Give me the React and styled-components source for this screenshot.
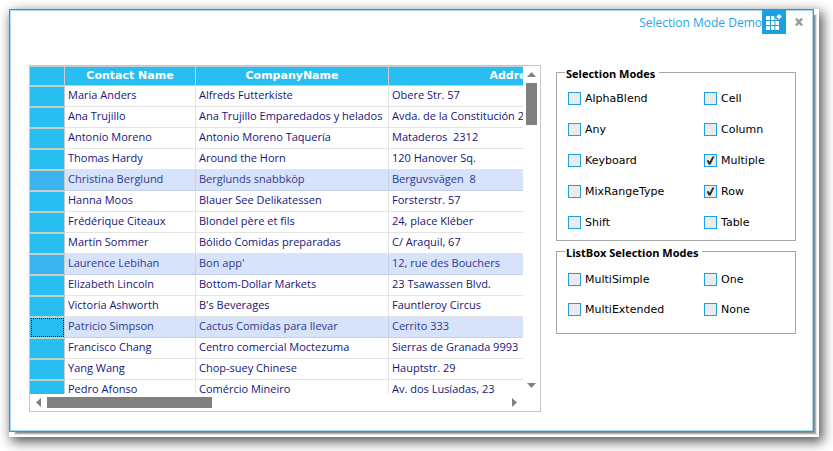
import React, { useState } from "react";
import styled, { createGlobalStyle, css } from "styled-components";

const GlobalStyle = createGlobalStyle`
  *, *::before, *::after { box-sizing: border-box; }
  body { margin: 0; background: #fff; font-family: "Open Sans", "Noto Sans", sans-serif; font-size: 11px; }
`;

const Page = styled.div`
  min-height: 100vh;
  padding: 9px 14px 14px 9px;
`;

const Backing = styled.div`
  padding: 0 5px 5px 0;
  background: #fff;
  box-shadow: 3px 4px 11px 1px rgba(0, 0, 0, 0.65);
`;

const Window = styled.main`
  display: flex;
  flex-direction: column;
  background: #fff;
  border: 1px solid #1b9fe0;
  box-shadow: inset 0 0 0 1px #a4dcf5, 4px 4px 0 -3px #929292, 4px 4px 0 -2px #b4b4b4, 4px 4px 0 -1px #e2e2e2;
`;

const TitleBar = styled.header`
  display: flex;
  justify-content: flex-end;
  height: 24px;
  padding-right: 10px;
`;

const Title = styled.h1`
  margin: 0;
  color: #2ba3e2;
  font: 400 12px/26px "Open Sans", "Noto Sans", sans-serif;
`;

const AppIcon = styled.svg`
  display: block;
  width: 24px;
  height: 24px;
`;

const CloseButton = styled.button`
  display: flex;
  align-items: center;
  justify-content: center;
  width: 8px;
  height: 24px;
  margin-left: 9px;
  padding: 0;
  border: 0;
  background: none;
`;

const Content = styled.div`
  display: flex;
  align-items: flex-start;
  gap: 15px;
  padding: 31px 17px 19px 19px;
`;

const GridFrame = styled.section`
  flex: 1;
  min-width: 0;
  display: grid;
  grid-template-columns: minmax(0, 1fr) 17px;
  grid-template-rows: 328px 17px;
  border: 1px solid #c6c6c6;
`;

const Viewport = styled.div`
  overflow: hidden;
`;

const Table = styled.table`
  width: 611px;
  table-layout: fixed;
  border-collapse: separate;
  border-spacing: 0;
  color: #15157a;
`;

const Column = styled.col`
  width: ${(p) => p.$width}px;
`;

const HeadCell = styled.th`
  height: 20px;
  padding: 0;
  background: #29bef2;
  border: 1px solid #c9cdd0;
  border-left: 0;
  color: #fff;
  font: 700 11px/16px "DejaVu Sans", sans-serif;
`;

const Cell = styled.td`
  height: 21px;
  padding: 0 0 2px 3px;
  border-right: 1px solid #e4e4e4;
  border-bottom: 1px solid #e4e4e4;
  line-height: 18px;
  white-space: pre;
`;

const RowHeader = styled.th`
  height: 21px;
  padding: 0;
  background: #29bef2;
  border: 1px solid #cbcbcb;
  border-left: 0;
  ${(p) => p.$focused && css`
    outline: 1px dotted #000;
    outline-offset: -2px;
  `}
`;

const Row = styled.tr`
  ${(p) => p.$selected && css`
    color: #2e3990;
    ${Cell} { background: #d7e3fa; border-color: #c5d1e8; }
    ${RowHeader} { background: ${p.$focused ? "#29bef2" : "#3ab3ef"}; }
  `}
`;

const ScrollBar = styled.div`
  display: flex;
  flex-direction: ${(p) => (p.$vertical ? "column" : "row")};
  align-items: center;
  justify-content: space-between;
  padding: ${(p) => (p.$vertical ? "6px 0" : "0 6px")};
`;

const ScrollTrack = styled.div`
  flex: 1;
  display: flex;
  margin: ${(p) => (p.$vertical ? "6px 0" : "0 6px")};
`;

const Thumb = styled.div`
  background: #808080;
  width: ${(p) => (p.$vertical ? "11px" : "36%")};
  height: ${(p) => (p.$vertical ? "42px" : "11px")};
`;

const ArrowButton = styled.button`
  display: flex;
  align-items: center;
  justify-content: center;
  padding: 0;
  border: 0;
  background: none;
`;

const Sidebar = styled.aside`
  flex: 0 0 240px;
  display: flex;
  flex-direction: column;
  gap: 3px;
`;

const Group = styled.fieldset`
  display: grid;
  grid-template-columns: 136px 1fr;
  row-gap: ${(p) => p.$gap}px;
  margin: 0;
  padding: ${(p) => p.$top}px 0 ${(p) => p.$bottom}px 11px;
  border: 1px solid #a7a7a7;
`;

const Legend = styled.legend`
  margin-left: -3px;
  padding: 3px 4px 0 1px;
  color: #000;
  font: 700 11px/12px "Open Sans", "Noto Sans", sans-serif;
`;

const OptionLabel = styled.label`
  display: flex;
  align-items: center;
  gap: 4px;
  color: #000;
  font: 11px/15px "DejaVu Sans", sans-serif;
`;

const Tick = styled.input`
  appearance: none;
  flex: none;
  width: 13px;
  height: 13px;
  margin: 0;
  border: 1px solid #1ba1e2;
  background: #ebebeb;
`;

const TickBox = styled.span`
  display: grid;
  & > * { grid-area: 1 / 1; }
  svg { pointer-events: none; }
`;

const customers = [
  ["Maria Anders", "Alfreds Futterkiste", "Obere Str. 57"],
  ["Ana Trujillo", "Ana Trujillo Emparedados y helados", "Avda. de la Constitución 2222"],
  ["Antonio Moreno", "Antonio Moreno Taquería", "Mataderos  2312"],
  ["Thomas Hardy", "Around the Horn", "120 Hanover Sq."],
  ["Christina Berglund", "Berglunds snabbköp", "Berguvsvägen  8"],
  ["Hanna Moos", "Blauer See Delikatessen", "Forsterstr. 57"],
  ["Frédérique Citeaux", "Blondel père et fils", "24, place Kléber"],
  ["Martín Sommer", "Bólido Comidas preparadas", "C/ Araquil, 67"],
  ["Laurence Lebihan", "Bon app'", "12, rue des Bouchers"],
  ["Elizabeth Lincoln", "Bottom-Dollar Markets", "23 Tsawassen Blvd."],
  ["Victoria Ashworth", "B's Beverages", "Fauntleroy Circus"],
  ["Patricio Simpson", "Cactus Comidas para llevar", "Cerrito 333"],
  ["Francisco Chang", "Centro comercial Moctezuma", "Sierras de Granada 9993"],
  ["Yang Wang", "Chop-suey Chinese", "Hauptstr. 29"],
  ["Pedro Afonso", "Comércio Mineiro", "Av. dos Lusíadas, 23"],
];
const selectedRows = [4, 8, 11];
const focusedRow = 11;

const selectionModes = [
  "AlphaBlend", "Cell", "Any", "Column", "Keyboard", "Multiple", "MixRangeType", "Row", "Shift", "Table",
];
const listBoxModes = ["MultiSimple", "One", "MultiExtended", "None"];

const arrows = {
  up: { w: 9, h: 5, d: "M0 5L4.5 0L9 5Z" },
  down: { w: 9, h: 5, d: "M0 0L4.5 5L9 0Z" },
  left: { w: 5, h: 9, d: "M5 0L0 4.5L5 9Z" },
  right: { w: 5, h: 9, d: "M0 0L5 4.5L0 9Z" },
};

function Arrow({ direction }) {
  const { w, h, d } = arrows[direction];
  return (
    <ArrowButton type="button" aria-label={`Scroll ${direction}`}>
      <svg width={w} height={h}><path d={d} fill="#808080" /></svg>
    </ArrowButton>
  );
}

function Scroll({ vertical }) {
  return (
    <ScrollBar $vertical={vertical}>
      <Arrow direction={vertical ? "up" : "left"} />
      <ScrollTrack $vertical={vertical}><Thumb $vertical={vertical} /></ScrollTrack>
      <Arrow direction={vertical ? "down" : "right"} />
    </ScrollBar>
  );
}

function Option({ name, initial }) {
  const [on, setOn] = useState(initial);
  return (
    <OptionLabel>
      <TickBox>
        <Tick type="checkbox" checked={on} onChange={() => setOn(!on)} />
        {on && (
          <svg width="13" height="13">
            <path d="M2.6 6.8L4.6 6L5.7 7.8L8.2 2.8L10.6 2.2L6.6 10.4L4.8 10.8Z" fill="#303030" />
          </svg>
        )}
      </TickBox>
      {name}
    </OptionLabel>
  );
}

export default function App() {
  return (
    <Page>
      <GlobalStyle />
      <Backing>
        <Window>
          <TitleBar>
            <Title>Selection Mode Demo</Title>
            <AppIcon viewBox="0 0 24 24" aria-hidden="true">
              <path fill="#1ba1e2" d="M0 0H24V24H0Z" />
              <path
                fill="#fff"
                d="M4 6H8V10H4ZM9 6H12.4V10H9ZM4 11H8V15H4ZM9 11H12.4V15H9ZM13.4 11H17V15H13.4ZM4 16H8V20H4ZM9 16H12.4V20H9ZM13.4 16H17V20H13.4ZM13.4 8L15.4 10H13.4ZM17 4L19.8 6.8L17 9.6L14.2 6.8Z"
              />
            </AppIcon>
            <CloseButton type="button" aria-label="Close">
              <svg width="8" height="8">
                <path d="M1 0.5L7 7.5M7 0.5L1 7.5" stroke="#999" strokeWidth="2.4" />
              </svg>
            </CloseButton>
          </TitleBar>
          <Content>
            <GridFrame>
              <Viewport>
                <Table>
                  <colgroup>
                    {[35, 131, 193, 252].map((w, i) => <Column key={i} $width={w} />)}
                  </colgroup>
                  <thead>
                    <tr>
                      <HeadCell aria-label="Row selector" />
                      <HeadCell>Contact Name</HeadCell>
                      <HeadCell>CompanyName</HeadCell>
                      <HeadCell>Address</HeadCell>
                    </tr>
                  </thead>
                  <tbody>
                    {customers.map((cells, i) => (
                      <Row key={cells[0]} $selected={selectedRows.includes(i)} $focused={i === focusedRow}>
                        <RowHeader $focused={i === focusedRow} aria-label={`Row ${i + 1}`} />
                        {cells.map((text) => <Cell key={text}>{text}</Cell>)}
                      </Row>
                    ))}
                  </tbody>
                </Table>
              </Viewport>
              <Scroll vertical />
              <Scroll />
            </GridFrame>
            <Sidebar>
              <Group $gap={16} $top={11} $bottom={10}>
                <Legend>Selection Modes</Legend>
                {selectionModes.map((name) => (
                  <Option key={name} name={name} initial={name === "Multiple" || name === "Row"} />
                ))}
              </Group>
              <Group $gap={15} $top={13} $bottom={16}>
                <Legend>ListBox Selection Modes</Legend>
                {listBoxModes.map((name) => <Option key={name} name={name} initial={false} />)}
              </Group>
            </Sidebar>
          </Content>
        </Window>
      </Backing>
    </Page>
  );
}
